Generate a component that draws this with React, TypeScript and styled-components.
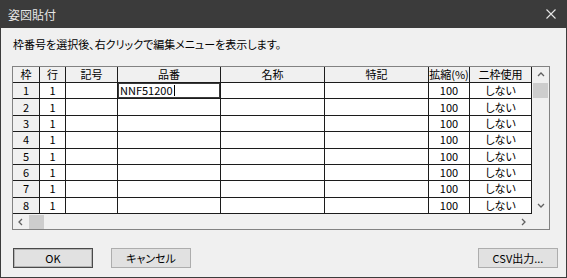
import React from 'react';
import styled, { createGlobalStyle } from 'styled-components';

const GlobalStyle = createGlobalStyle`
  html, body {
    margin: 0;
    padding: 0;
    background: #f0f0f0;
  }
  * {
    box-sizing: border-box;
  }
`;

const COLS = [27, 26, 52, 103, 104, 104, 41, 62];
const HEADERS = ['枠', '行', '記号', '品番', '名称', '特記', '拡縮(%)', '二枠使用'];
const ROW_H = 16.375;

const Window = styled.div`
  width: 567px;
  height: 278px;
  display: flex;
  flex-direction: column;
  background: #f0f0f0;
  border: 1px solid #3c3c3c;
  border-top: none;
  font-family: 'Noto Sans CJK JP', 'Liberation Sans', sans-serif;
  font-size: 11px;
  color: #000;
  font-feature-settings: 'palt';
`;

const TitleBar = styled.div`
  height: 28px;
  flex: none;
  display: flex;
  align-items: center;
  justify-content: space-between;
  background: #3b3b3b;
  margin: 0 -1px;
  padding: 0 10px 0 8px;
  color: #e6e6e6;
  font-size: 12px;
`;

const Close = styled.div`
  display: flex;
  align-items: center;
  justify-content: center;
  width: 12px;
  height: 12px;
`;

const Body = styled.div`
  flex: 1;
  display: flex;
  flex-direction: column;
  padding: 8px 16px 0 11px;
`;

const Instruction = styled.div`
  height: 16px;
  line-height: 16px;
  margin-bottom: 14px;
  padding-left: 1px;
`;

const Frame = styled.div`
  width: 538px;
  height: 164px;
  border: 1px solid #828282;
  display: grid;
  grid-template-columns: 519px 17px;
  grid-template-rows: 147px 15px;
  background: #ffffff;
`;

const Grid = styled.div`
  display: grid;
  grid-template-columns: ${COLS.map((c) => `${c}px`).join(' ')};
  grid-template-rows: 16px repeat(8, ${ROW_H}px);
`;

const Cell = styled.div<{ $head?: boolean; $align?: 'left' | 'center' | 'right'; $edit?: boolean }>`
  display: flex;
  align-items: center;
  justify-content: ${(p) => (p.$align === 'left' ? 'flex-start' : p.$align === 'right' ? 'flex-end' : 'center')};
  padding: 0 2px;
  border-right: 1px solid #1c1c1c;
  border-bottom: 1px solid #1c1c1c;
  background: ${(p) => (p.$head ? '#f0f0f0' : '#ffffff')};
  white-space: nowrap;
  overflow: hidden;
  line-height: 1;
  box-shadow: ${(p) => (p.$edit ? 'inset 0 0 0 1px #3a3a3a' : 'none')};
`;

const Caret = styled.span`
  display: inline-block;
  width: 1px;
  height: 11px;
  background: #000;
  margin-left: 1px;
`;

const VScroll = styled.div`
  display: flex;
  flex-direction: column;
  background: #f0f0f0;
`;

const HScroll = styled.div`
  display: flex;
  align-items: stretch;
  background: #f0f0f0;
`;

const Corner = styled.div`
  background: #f0f0f0;
`;

const Arrow = styled.div<{ $w: number; $h: number }>`
  flex: none;
  width: ${(p) => p.$w}px;
  height: ${(p) => p.$h}px;
  display: flex;
  align-items: center;
  justify-content: center;
`;

const Thumb = styled.div<{ $w: number; $h: number }>`
  flex: none;
  width: ${(p) => p.$w}px;
  height: ${(p) => p.$h}px;
  background: #cdcdcd;
  align-self: center;
`;

const Track = styled.div`
  flex: 1;
`;

const ButtonRow = styled.div`
  display: flex;
  align-items: center;
  margin-top: 18px;
  padding-left: 1px;
  margin-right: -8px;
`;

const Button = styled.div<{ $default?: boolean }>`
  width: 80px;
  height: 20px;
  display: flex;
  align-items: center;
  justify-content: center;
  background: #e1e1e1;
  border: 1px solid ${(p) => (p.$default ? '#4a4a4a' : '#adadad')};
  box-shadow: ${(p) => (p.$default ? 'inset 0 0 0 1px #b4b4b4' : 'none')};
  margin-right: 18px;

  &:last-child {
    margin-left: auto;
    margin-right: 0;
  }
`;

const Chevron = ({ dir }: { dir: 'up' | 'down' | 'left' | 'right' }) => {
  const paths = {
    up: 'M1 5 L4 2 L7 5',
    down: 'M1 2 L4 5 L7 2',
    left: 'M5 1 L2 4 L5 7',
    right: 'M2 1 L5 4 L2 7'
  };
  return (
    <svg width="8" height="8" viewBox="0 0 8 8">
      <path d={paths[dir]} fill="none" stroke="#606060" strokeWidth="1.3" />
    </svg>
  );
};

const App = () => {
  const rows = Array.from({ length: 8 }, (_, i) => i + 1);
  return (
    <>
      <GlobalStyle />
      <Window>
        <TitleBar>
          <span>姿図貼付</span>
          <Close>
            <svg width="10" height="10" viewBox="0 0 10 10">
              <path d="M0.5 0.5 L9.5 9.5 M9.5 0.5 L0.5 9.5" stroke="#e6e6e6" strokeWidth="1.1" />
            </svg>
          </Close>
        </TitleBar>
        <Body>
          <Instruction>枠番号を選択後、右クリックで編集メニューを表示します。</Instruction>
          <Frame>
            <Grid>
              {HEADERS.map((h) => (
                <Cell key={h} $head>
                  {h}
                </Cell>
              ))}
              {rows.map((r) => (
                <React.Fragment key={r}>
                  <Cell $head>{r}</Cell>
                  <Cell>1</Cell>
                  <Cell />
                  {r === 1 ? (
                    <Cell $align="left" $edit>
                      NNF51200
                      <Caret />
                    </Cell>
                  ) : (
                    <Cell />
                  )}
                  <Cell />
                  <Cell />
                  <Cell>100</Cell>
                  <Cell>しない</Cell>
                </React.Fragment>
              ))}
            </Grid>
            <VScroll>
              <Arrow $w={17} $h={16}>
                <Chevron dir="up" />
              </Arrow>
              <Thumb $w={15} $h={15} />
              <Track />
              <Arrow $w={17} $h={16}>
                <Chevron dir="down" />
              </Arrow>
            </VScroll>
            <HScroll>
              <Arrow $w={16} $h={15}>
                <Chevron dir="left" />
              </Arrow>
              <Thumb $w={15} $h={14} />
              <Track />
              <Arrow $w={16} $h={15}>
                <Chevron dir="right" />
              </Arrow>
            </HScroll>
            <Corner />
          </Frame>
          <ButtonRow>
            <Button $default>OK</Button>
            <Button>キャンセル</Button>
            <Button>CSV出力...</Button>
          </ButtonRow>
        </Body>
      </Window>
    </>
  );
};

export default App;
